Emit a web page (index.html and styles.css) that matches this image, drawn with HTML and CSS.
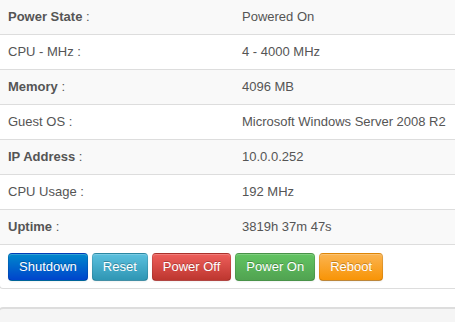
FILE: index.html
```html
<!DOCTYPE html>
<html lang="en">

<head>
    <meta charset="UTF-8">
    <title>VM Details</title>
    <link rel="stylesheet" href="styles.css">
</head>

<body>

    <div class="panel">
        <table class="info">
            <tr>
                <td class="label"><b>Power State</b> :</td>
                <td>Powered On</td>
            </tr>
            <tr>
                <td class="label">CPU - MHz :</td>
                <td>4 - 4000 MHz</td>
            </tr>
            <tr>
                <td class="label"><b>Memory</b> :</td>
                <td>4096 MB</td>
            </tr>
            <tr>
                <td class="label">Guest OS :</td>
                <td>Microsoft Windows Server 2008 R2</td>
            </tr>
            <tr>
                <td class="label"><b>IP Address</b> :</td>
                <td>10.0.0.252</td>
            </tr>
            <tr>
                <td class="label">CPU Usage :</td>
                <td>192 MHz</td>
            </tr>
            <tr>
                <td class="label"><b>Uptime</b> :</td>
                <td>3819h 37m 47s</td>
            </tr>
        </table>

        <div class="actions">
            <button class="btn btn-primary">Shutdown</button>
            <button class="btn btn-info">Reset</button>
            <button class="btn btn-danger">Power Off</button>
            <button class="btn btn-success">Power On</button>
            <button class="btn btn-warning">Reboot</button>
        </div>
    </div>

    <div class="panel-next"></div>

</body>

</html>
```

FILE: styles.css
```css
html,
body {
    margin: 0;
    padding: 0;
    background: white;
    color: #555;
    font-family: "Liberation Sans", Arial, sans-serif;
    font-size: 13px;
    overflow: hidden;
}

.panel {
    width: 600px;
}

.info {
    width: 100%;
    border-collapse: collapse;
}

.info td {
    padding: 8px;
    line-height: 18px;
    border-bottom: 1px solid #ddd;
    white-space: nowrap;
}

.info tr:nth-child(odd) td {
    background: #f9f9f9;
}

.info td.label {
    width: 218px;
}

.info b {
    font-weight: bold;
}

.actions {
    display: flex;
    gap: 4px;
    padding: 8px 8px 7px;
    border-left: 1px solid #ddd;
    border-bottom: 1px solid #ddd;
    border-bottom-left-radius: 4px;
    margin-left: -1px;
}

.btn {
    font-family: "Liberation Sans", Arial, sans-serif;
    font-size: 13px;
    line-height: 18px;
    padding: 4px 10px;
    color: white;
    text-shadow: 0 -1px 0 rgba(0, 0, 0, 0.25);
    border: 1px solid rgba(0, 0, 0, 0.1);
    border-bottom-color: rgba(0, 0, 0, 0.25);
    border-radius: 4px;
    box-shadow: inset 0 1px 0 rgba(255, 255, 255, 0.2), 0 1px 2px rgba(0, 0, 0, 0.05);
    cursor: pointer;
}

.btn-primary {
    background: linear-gradient(to bottom, #0088cc, #0044cc);
}

.btn-info {
    background: linear-gradient(to bottom, #5bc0de, #2f96b4);
}

.btn-danger {
    background: linear-gradient(to bottom, #ee5f5b, #bd362f);
}

.btn-success {
    background: linear-gradient(to bottom, #62c462, #51a351);
}

.btn-warning {
    background: linear-gradient(to bottom, #fbb450, #f89406);
}

.panel-next {
    width: 600px;
    height: 30px;
    margin-top: 18px;
    background: #f5f5f5;
    border-top: 2px solid #ddd;
    border-left: 1px solid #ddd;
    border-top-left-radius: 4px;
    margin-left: -1px;
}
```
